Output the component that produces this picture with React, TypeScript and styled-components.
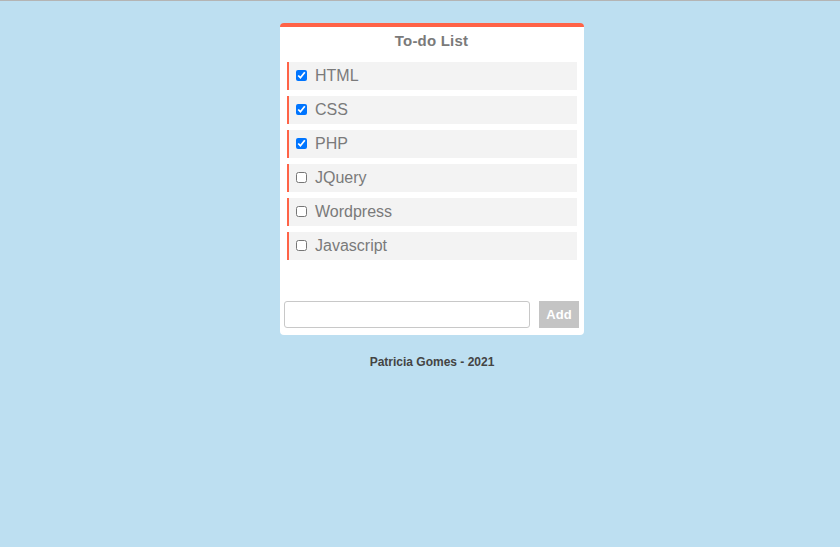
import * as React from "react";
import styled, { createGlobalStyle } from "styled-components";

const GlobalStyle = createGlobalStyle`
  html, body {
    margin: 0;
    padding: 0;
    background: #bddff1;
  }
  body {
    border-top: 1px solid #b4b4b4;
    font-family: "Liberation Sans", Arial, sans-serif;
    min-height: 546px;
  }
`;

const Page = styled.div`
  display: flex;
  flex-direction: column;
  align-items: center;
  padding: 22px 0 0 24px;
`;

const Card = styled.div`
  width: 304px;
  box-sizing: border-box;
  background: #fff;
  border-top: 4px solid #ff6347;
  border-radius: 4px;
  padding: 0 5px 7px 4px;
`;

const Title = styled.h1`
  margin: 0;
  height: 35px;
  box-sizing: border-box;
  padding-bottom: 9px;
  display: flex;
  align-items: center;
  justify-content: center;
  font-size: 15px;
  font-weight: bold;
  letter-spacing: 0.2px;
  color: #7a7a7a;
`;

const List = styled.ul`
  list-style: none;
  margin: 0;
  padding: 0 2px 0 3px;
  display: flex;
  flex-direction: column;
  gap: 6px;
  min-height: 239px;
`;

const Item = styled.li`
  height: 28px;
  display: flex;
  align-items: center;
  background: #f3f3f3;
  border-left: 2px solid #ff6347;
  padding-left: 5px;
  font-size: 16px;
  color: #7a7a7a;
`;

const Check = styled.input`
  margin: 0 8px 1px 2px;
  width: 11px;
  height: 11px;
`;

const Form = styled.form`
  display: flex;
  align-items: center;
  gap: 9px;
`;

const TextInput = styled.input`
  flex: 1;
  height: 27px;
  box-sizing: border-box;
  border: 1px solid #c8c8c8;
  border-radius: 3px;
  padding: 0 6px;
  font-size: 14px;
  font-family: "Liberation Sans", Arial, sans-serif;
`;

const AddButton = styled.button`
  width: 40px;
  height: 27px;
  border: none;
  background: #c4c4c4;
  color: #fff;
  font-weight: bold;
  font-size: 13px;
  font-family: "Liberation Sans", Arial, sans-serif;
  padding: 0;
`;

const Footer = styled.p`
  margin: 20px 0 0;
  font-size: 12px;
  font-weight: bold;
  color: #444;
`;

const todos = [
  { text: "HTML", done: true },
  { text: "CSS", done: true },
  { text: "PHP", done: true },
  { text: "JQuery", done: false },
  { text: "Wordpress", done: false },
  { text: "Javascript", done: false },
];

export default function App() {
  const [items, setItems] = React.useState(todos);
  const [value, setValue] = React.useState("");

  const toggle = (i: number) =>
    setItems(prev => prev.map((t, idx) => (idx === i ? { ...t, done: !t.done } : t)));

  const onAdd = (e: React.FormEvent) => {
    e.preventDefault();
    if (!value.trim()) return;
    setItems(prev => [...prev, { text: value.trim(), done: false }]);
    setValue("");
  };

  return (
    <>
      <GlobalStyle />
      <Page>
        <Card>
          <Title>To-do List</Title>
          <List>
            {items.map((t, i) => (
              <Item key={t.text + i}>
                <Check type="checkbox" checked={t.done} onChange={() => toggle(i)} />
                {t.text}
              </Item>
            ))}
          </List>
          <Form onSubmit={onAdd}>
            <TextInput value={value} onChange={e => setValue(e.target.value)} />
            <AddButton type="submit">Add</AddButton>
          </Form>
        </Card>
        <Footer>Patricia Gomes - 2021</Footer>
      </Page>
    </>
  );
}
